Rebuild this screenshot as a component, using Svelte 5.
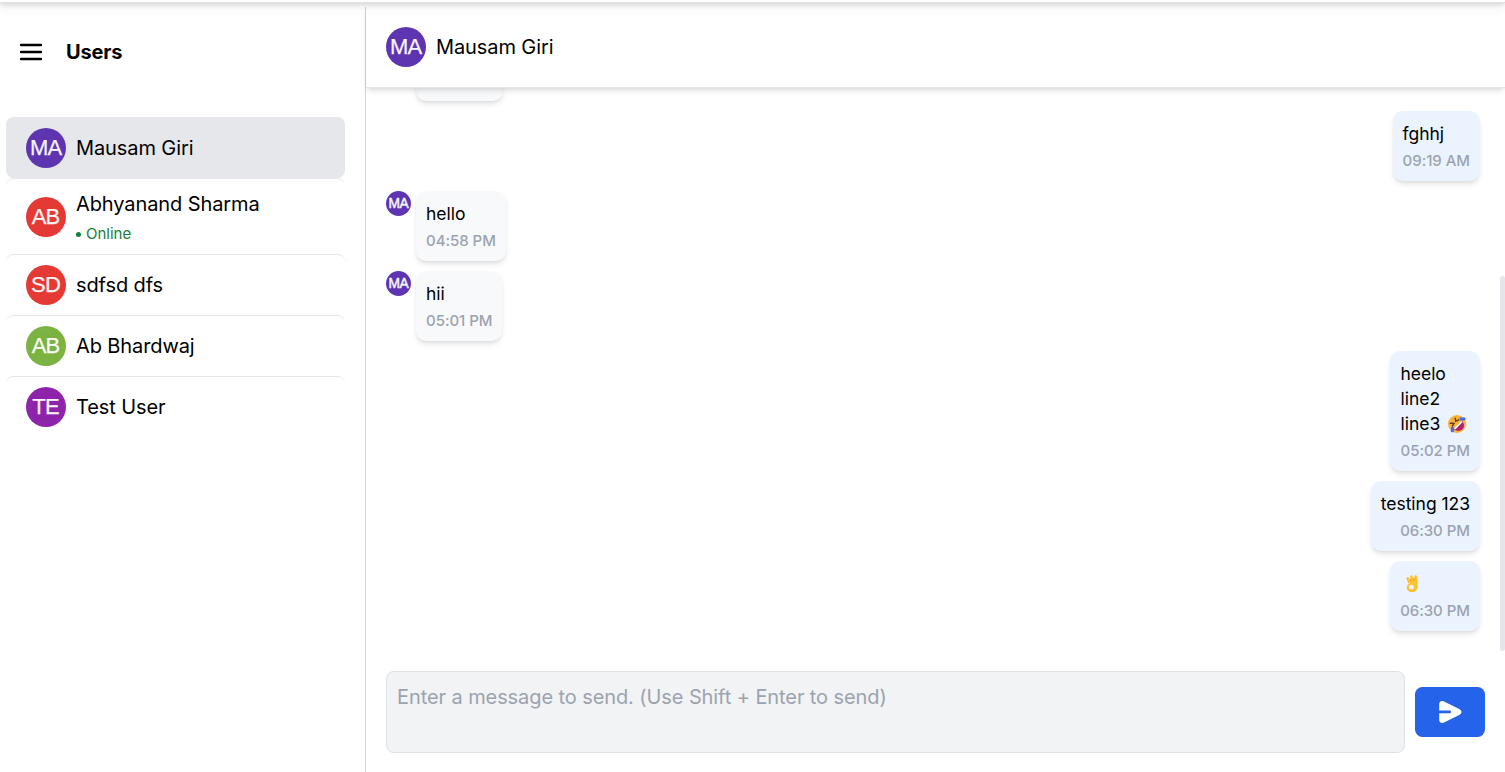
<script>
  const users = [
    { name: 'Mausam Giri', initials: 'MA', color: '#5e35b1', active: true },
    { name: 'Abhyanand Sharma', initials: 'AB', color: '#e53935', online: true },
    { name: 'sdfsd dfs', initials: 'SD', color: '#e53935' },
    { name: 'Ab Bhardwaj', initials: 'AB', color: '#7cb342' },
    { name: 'Test User', initials: 'TE', color: '#8e24aa' },
  ];
  const messages = [
    { mine: false, lines: ['hii'], time: '05:00 PM', earlier: true },
    { mine: true, lines: ['fghhj'], time: '09:19 AM' },
    { mine: false, lines: ['hello'], time: '04:58 PM' },
    { mine: false, lines: ['hii'], time: '05:01 PM' },
    { mine: true, lines: ['heelo', 'line2', 'line3 '], emoji: 'laugh', time: '05:02 PM' },
    { mine: true, lines: ['testing 123'], time: '06:30 PM' },
    { mine: true, lines: [''], emoji: 'ok', time: '06:30 PM' },
  ];
</script>

{#snippet avatar(initials, color, small)}
  <svg class="avatar" class:small viewBox="0 0 40 40" style:background={color}>
    <text x="19.6" y={small ? 27.4 : 27} text-anchor="middle">{initials}</text>
  </svg>
{/snippet}

<div class="page">
  <div class="topbar"></div>
  <main>
    <aside>
      <header class="users-head">
        <svg class="burger" viewBox="0 0 24 18"><path d="M2.1 2H21.9M2.1 9H21.9M2.1 16H21.9" /></svg>
        <h1>Users</h1>
      </header>
      <ul>
        {#each users as u}
          <li class:active={u.active}>
            {@render avatar(u.initials, u.color, false)}
            <div class="who">
              <span class="name">{u.name}</span>
              {#if u.online}<span class="online"><i></i>Online</span>{/if}
            </div>
          </li>
        {/each}
      </ul>
    </aside>

    <section>
      <header class="chat-head">
        {@render avatar('MA', '#5e35b1', false)}
        <span class="name">Mausam Giri</span>
      </header>

      <div class="scroller">
        <div class="messages">
          {#each messages as m}
            <div class="row" class:mine={m.mine}>
              {#if !m.mine}
                {#if m.earlier}<span class="gap"></span>{:else}{@render avatar('MA', '#5e35b1', true)}{/if}
              {/if}
              <div class="bubble" class:earlier={m.earlier}>
                {#if !m.earlier}
                  <div class="text">
                    {#each m.lines as line, i}
                      <div>{line}{#if m.emoji === 'laugh' && i === 2}<svg class="laugh" viewBox="0 0 20 20">
                            <circle cx="10" cy="10" r="9" fill="#fcb13a" />
                            <path d="M7.2 15.3 15.2 7.2C18 10.5 17.2 14 14.8 15.8 12.2 17.6 9.2 17 7.2 15.3Z" fill="#b51e78" />
                            <path d="M7.2 14.3 14.2 7.2 15.6 8.1 8.3 15.6Z" fill="#fff" />
                            <path d="M3.3 9.2 7 9.3 5.4 12.2M8.2 4.2 8.7 7.3 11.8 5.8" fill="none" stroke="#5d3a20" stroke-width="1.4" stroke-linecap="round" />
                            <rect x="12.8" y="3.6" width="5.6" height="3" rx="1" fill="#4268f6" />
                            <rect x="3.9" y="12.9" width="3" height="5.4" rx="1" fill="#4268f6" />
                          </svg>{/if}{#if m.emoji === 'ok'}<svg class="ok" viewBox="0 0 20 20">
                            <path d="M6.2 8.2 4.7 4.4M9.5 7 8.4 2.6M12.4 7 12.8 2.6" stroke="#fcc22f" stroke-width="2.6" stroke-linecap="round" />
                            <path d="M5.4 7.3 8 5.4 14.2 4 14.8 12.5C14.8 16 12.3 18 9.2 18 5.9 18 3.7 16.1 3.7 13.4 3.7 11 5.2 9.8 7 9.4Z" fill="#fcc22f" />
                            <path d="M7 4.5 8.1 7.2M10.8 3.6 11 7" stroke="#dd8520" stroke-width=".8" />
                            <circle cx="8.5" cy="13.2" r="2.4" fill="#ebf3ff" />
                          </svg>{/if}</div>
                    {/each}
                  </div>
                  <time>{m.time}</time>
                {/if}
              </div>
            </div>
          {/each}
        </div>
        <div class="track"><div class="thumb"></div></div>
      </div>

      <footer>
        <textarea placeholder="Enter a message to send. (Use Shift + Enter to send)"></textarea>
        <button aria-label="Send">
          <svg viewBox="0 0 24 24">
            <path d="M1.2 10.6V4.2C1.2 1.2 3.6 .2 6 1.4L21.2 9C24.2 10.5 24.2 13.5 21.2 15L6 22.6C3.6 23.8 1.2 22.6 1.2 19.8V13.2H12.8V10.6Z" />
          </svg>
        </button>
      </footer>
    </section>
  </main>
</div>

<style>
  :global(body) { background: #fff; overflow: hidden; }
  * { box-sizing: border-box; }
  .page {
    height: 772px; display: flex; flex-direction: column;
    font: 20px/30px Inter, sans-serif; color: #000;
  }
  .topbar {
    height: 3px; flex: none; position: relative; z-index: 3;
    background: #fff; border-bottom: 1px solid #e0e1e4;
    box-shadow: 0 5px 10px 0 rgb(0 0 0 / .1), 0 1px 5px 0 rgb(0 0 0 / .24);
  }
  main { flex: 1; min-height: 0; display: flex; padding-top: 4px; }
  aside { width: 366px; flex: none; border-right: 1px solid #d1d5db; }
  .users-head { height: 90px; padding-left: 19px; display: flex; align-items: center; gap: 23px; }
  .burger { width: 24px; height: 18px; overflow: visible; }
  .burger path { stroke: #000; stroke-width: 2.5; stroke-linecap: round; fill: none; }
  h1 { margin: 0; font-size: 20px; line-height: 30px; font-weight: 700; letter-spacing: -.15px; }
  .name { letter-spacing: -.1px; }
  ul { list-style: none; margin: 20px 20px 0 6px; padding: 0; }
  li {
    display: flex; align-items: center; gap: 10px; padding: 10px 20px;
    border-top: 1px solid #e5e7eb; border-radius: 7.5px;
  }
  li.active { background: #e5e7eb; }
  li:nth-child(2) { height: 76px; }
  .avatar { width: 40px; height: 40px; flex: none; border-radius: 50%; }
  .avatar text {
    font: 22px "Liberation Sans", sans-serif; fill: #fff; opacity: .95;
    stroke: #fff; stroke-width: .25px; letter-spacing: -.8px;
  }
  .avatar.small { width: 25px; height: 25px; }
  .avatar.small text { stroke-width: .8px; }
  .who { display: flex; flex-direction: column; }
  .online { display: flex; align-items: center; gap: 5px; margin-top: 4px; font-size: 15px; line-height: 22px; color: #15803d; }
  .online i { width: 5px; height: 5px; margin-top: 1px; border-radius: 50%; background: currentColor; }
  section { flex: 1; min-width: 0; display: flex; flex-direction: column; }
  .chat-head {
    height: 81px; flex: none; display: flex; align-items: center; gap: 10px; padding: 0 20px;
    position: relative; z-index: 2; background: #fff; border-bottom: 1px solid #e5e7eb;
    box-shadow: 0 4px 6px -1px rgb(0 0 0 / .1), 0 2px 4px -2px rgb(0 0 0 / .1);
  }
  .scroller { height: 563px; flex: none; display: flex; overflow: hidden; }
  .messages {
    flex: 1; display: flex; flex-direction: column; justify-content: flex-end; gap: 10px;
    padding: 0 20px 20px;
  }
  .row { display: flex; gap: 5px; align-items: flex-start; flex: none; }
  .row.mine { justify-content: flex-end; }
  .gap { width: 25px; }
  .bubble {
    padding: 10px; border-radius: 10px; background: #f7f9fb;
    display: flex; flex-direction: column;
    box-shadow: 0 4px 6px -1px rgb(0 0 0 / .1), 0 2px 4px -2px rgb(0 0 0 / .1);
  }
  .earlier { width: 87px; height: 70px; }
  .mine .bubble { background: #ebf3ff; }
  .text { font-size: 17.5px; line-height: 25px; letter-spacing: -.03px; }
  .text div { min-height: 25px; white-space: pre; display: flex; align-items: center; }
  .laugh { width: 20px; height: 20px; margin-left: 2px; }
  .ok { width: 20px; height: 20px; margin-left: 3px; }
  time { margin-top: 5px; font-size: 15px; line-height: 20px; font-weight: 500; letter-spacing: -.03px; color: #9ca3af; }
  .mine time { text-align: right; }
  .track { width: 5px; padding-top: 188px; flex: none; }
  .thumb { height: 375px; background: #e5e7eb; border-radius: 3px; }
  footer { flex: 1; display: flex; align-items: center; gap: 10px; padding: 1px 20px 0; }
  textarea {
    flex: 1; height: 82px; margin: 0; padding: 10px; resize: none; outline: none;
    font: 20px/30px Inter, sans-serif; letter-spacing: -.09px; background: #f1f3f5;
    border: 1px solid #dee2e6; border-radius: 7.5px;
  }
  textarea::placeholder { color: #9ca3af; opacity: 1; }
  button {
    width: 70px; height: 50px; padding: 0; border: 0; border-radius: 7.5px; background: #2563eb;
    display: grid; place-items: center;
  }
  button svg { width: 24px; height: 24px; fill: #fff; }
</style>
